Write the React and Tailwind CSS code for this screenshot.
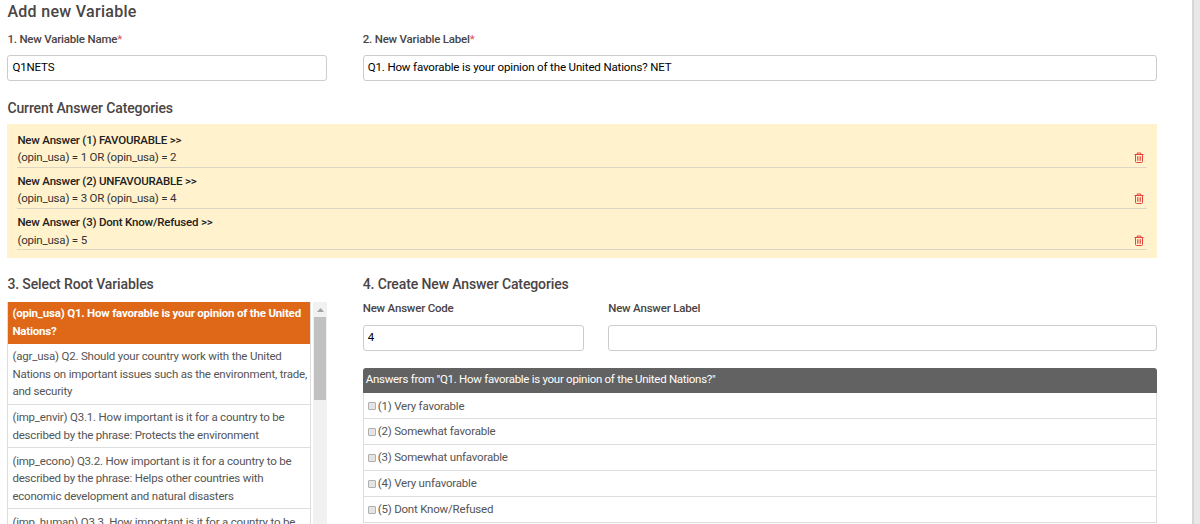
import React, { useState } from "react";

const initialCategories = [
  { code: 1, label: "FAVOURABLE", rule: "(opin_usa) = 1 OR (opin_usa) = 2" },
  { code: 2, label: "UNFAVOURABLE", rule: "(opin_usa) = 3 OR (opin_usa) = 4" },
  { code: 3, label: "Dont Know/Refused", rule: "(opin_usa) = 5" },
];

const rootVariables = [
  { name: "opin_usa", text: "Q1. How favorable is your opinion of the United Nations?" },
  { name: "agr_usa", text: "Q2. Should your country work with the United Nations on important issues such as the environment, trade, and security" },
  { name: "imp_envir", text: "Q3.1. How important is it for a country to be described by the phrase: Protects the environment" },
  { name: "imp_econo", text: "Q3.2. How important is it for a country to be described by the phrase: Helps other countries with economic development and natural disasters" },
  { name: "imp_human", text: "Q3.3. How important is it for a country to be" },
];

const answers = [
  "Very favorable",
  "Somewhat favorable",
  "Somewhat unfavorable",
  "Very unfavorable",
  "Dont Know/Refused",
];

const inputClass =
  "block w-full h-[26px] border border-[#ccc] rounded-[3px] bg-white px-1 pb-[2px] text-[11.5px] tracking-[-0.14px] text-black outline-none";

function TrashIcon() {
  return (
    <svg width="10" height="11" viewBox="0 0 10 11" fill="none" stroke="#e2453c">
      <path d="M0.5 2.5h9M3.2 2.2V1h3.6v1.2" />
      <path d="M1.5 2.5v7q0 1 1 1h5q1 0 1-1v-7" />
      <path d="M3.5 4.2v4.6M5 4.2v4.6M6.5 4.2v4.6" strokeWidth="0.8" />
    </svg>
  );
}

export default function App() {
  const [name, setName] = useState("Q1NETS");
  const [label, setLabel] = useState("Q1. How favorable is your opinion of the United Nations? NET");
  const [code, setCode] = useState("4");
  const [answerLabel, setAnswerLabel] = useState("");
  const [categories, setCategories] = useState(initialCategories);
  const [selected, setSelected] = useState(0);

  const removeCategory = (c) => {
    setCategories(categories.filter((item) => item.code !== c));
  };

  return (
    <div className="flex h-[524px] overflow-hidden bg-white font-[Roboto,sans-serif] text-[11.5px] leading-[17.5px] tracking-[-0.2px] text-[#555]">
      <div className="flex-1 min-w-0 pl-[7.4px] pr-[35.5px]">
        <h1 className="pt-[2px] h-[31px] text-[16px] leading-5 font-medium tracking-[0.3px] text-[#4a4444]">Add new Variable</h1>

        <div className="flex gap-[35.3px]">
          <div className="w-[320px]">
            <label className="block h-6 font-medium text-[#4a4444]">
              1. New Variable Name<span className="font-normal text-[#e04b5a]">*</span>
            </label>
            <input className={inputClass} value={name} onChange={(e) => setName(e.target.value)} />
          </div>
          <div className="flex-1">
            <label className="block h-6 font-medium text-[#4a4444]">
              2. New Variable Label<span className="font-normal text-[#e04b5a]">*</span>
            </label>
            <input className={inputClass} value={label} onChange={(e) => setLabel(e.target.value)} />
          </div>
        </div>

        <h2 className="mt-[17px] h-[26px] text-[14px] leading-5 font-medium tracking-[-0.12px] text-[#4a4444]">Current Answer Categories</h2>

        <div className="h-[134px] bg-[#fff2cd] px-[10px] pt-[7.6px]">
          {categories.map((c) => (
            <div key={c.code} className="h-[41.4px]">
              <div className="h-[36px] border-b border-[#dcd6c4] text-[#333]">
                <div className="font-medium text-[#222]">{`New Answer (${c.code}) ${c.label} >>`}</div>
                <div className="flex h-[17.5px] items-center justify-between pr-[3px]">
                  <span>{c.rule}</span>
                  <button className="pb-px" onClick={() => removeCategory(c.code)}>
                    <TrashIcon />
                  </button>
                </div>
              </div>
            </div>
          ))}
        </div>

        <div className="mt-4 flex gap-[35.3px]">
          <div className="w-[320px]">
            <h2 className="h-[28px] text-[14px] leading-5 font-medium tracking-[-0.12px] text-[#4a4444]">3. Select Root Variables</h2>
            <div className="flex h-[222px] overflow-hidden">
              <div className="w-[304px] shrink-0 border-l border-r border-[#ddd]">
                {rootVariables.map((v, i) => (
                  <div
                    key={v.name}
                    onClick={() => setSelected(i)}
                    className={
                      i === selected
                        ? "border-b border-[#de6718] bg-[#de6718] pl-1 pt-[3px] pb-[3px] font-bold text-white"
                        : "border-b border-[#ddd] bg-white pl-1 pt-[4.4px] pb-[3.1px]"
                    }
                  >
                    {`(${v.name}) ${v.text}`}
                  </div>
                ))}
              </div>
              <div className="ml-[2px] w-[14px] bg-[#f1f1f1]">
                <div className="flex h-[15px] items-center justify-center">
                  <svg width="7" height="4" viewBox="0 0 7 4">
                    <path d="M0 4L3.5 0L7 4Z" fill="#a3a3a3" />
                  </svg>
                </div>
                <div className="ml-px w-3 h-[83px] bg-[#c1c1c1]" />
              </div>
            </div>
          </div>

          <div className="flex-1">
            <h2 className="h-[26px] text-[14px] leading-5 font-medium tracking-[-0.12px] text-[#4a4444]">4. Create New Answer Categories</h2>
            <div className="flex gap-6">
              <div className="w-[221.5px]">
                <label className="block h-[25px] font-medium text-[#4a4444]">New Answer Code</label>
                <input className={inputClass} value={code} onChange={(e) => setCode(e.target.value)} />
              </div>
              <div className="flex-1">
                <label className="block h-[25px] font-medium text-[#4a4444]">New Answer Label</label>
                <input className={inputClass} value={answerLabel} onChange={(e) => setAnswerLabel(e.target.value)} />
              </div>
            </div>

            <div className="mt-[17px] h-[25.4px] rounded-t-[3px] bg-[#626262] px-[3px] pt-[3px] tracking-[-0.28px] text-white">
              {`Answers from "${rootVariables[selected].text}"`}
            </div>
            <div className="border-x border-[#ddd]">
              {answers.map((a, i) => (
                <label key={a} className="flex h-[25.9px] items-center gap-[2px] border-b border-[#ddd] pl-1 pt-px">
                  <input
                    type="checkbox"
                    className="size-2 appearance-none rounded-[1px] border border-[#b0b0b0] bg-[#e4e4e4] checked:bg-[#626262]"
                  />
                  <span>{`(${i + 1}) ${a}`}</span>
                </label>
              ))}
            </div>
          </div>
        </div>
      </div>

      <div className="w-2 border-l-2 border-[#d6d6d6] bg-[#e8e8e8]" />
    </div>
  );
}
